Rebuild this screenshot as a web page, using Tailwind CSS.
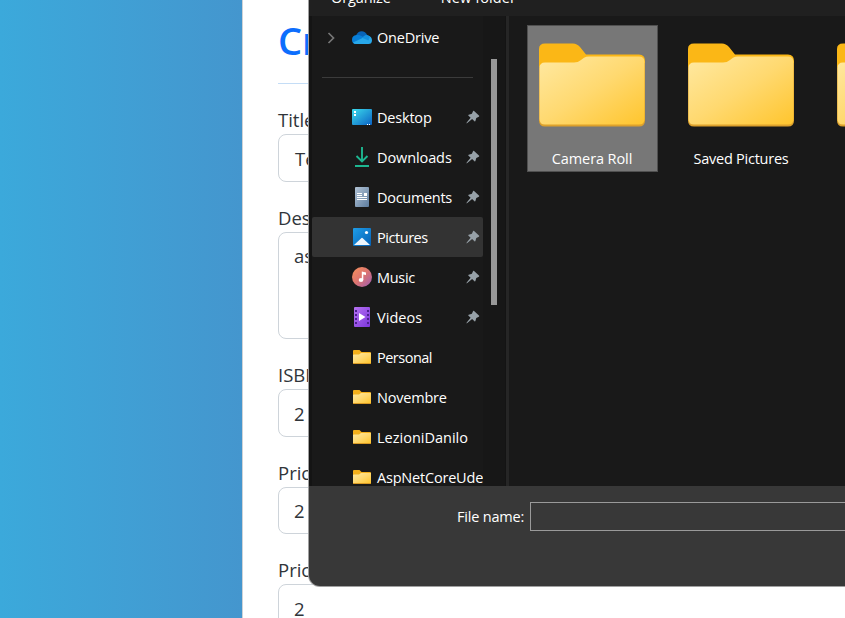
<!DOCTYPE html>
<html lang="en">
<head>
<meta charset="utf-8">
<title>Create product</title>
<script src="https://cdn.jsdelivr.net/npm/@tailwindcss/browser@4"></script>
</head>
<body class="m-0 overflow-hidden">
<svg class="absolute h-0 w-0" aria-hidden="true">
  <defs>
    <linearGradient id="gf" x1="0" y1="0" x2="1" y2="1"><stop offset="0" stop-color="#ffe9a2"/><stop offset=".5" stop-color="#ffd970"/><stop offset="1" stop-color="#ffc52d"/></linearGradient>
    <linearGradient id="gd" x1="0" y1="0" x2="1" y2="1"><stop offset="0" stop-color="#3cdcec"/><stop offset="1" stop-color="#0b62c4"/></linearGradient>
    <linearGradient id="gdoc" x1="0" y1="0" x2="1" y2="1"><stop offset="0" stop-color="#b3c4d6"/><stop offset="1" stop-color="#5c7c9e"/></linearGradient>
    <linearGradient id="gp" x1="0" y1="0" x2="1" y2="1"><stop offset="0" stop-color="#1f9ee8"/><stop offset="1" stop-color="#0560b5"/></linearGradient>
    <linearGradient id="gm" x1="0" y1="0" x2="1" y2="1"><stop offset="0" stop-color="#f9935a"/><stop offset=".5" stop-color="#dc7471"/><stop offset="1" stop-color="#9b5cb5"/></linearGradient>
    <linearGradient id="gv" x1="0" y1="0" x2="1" y2="1"><stop offset="0" stop-color="#b672f2"/><stop offset="1" stop-color="#7c35dc"/></linearGradient>
    <symbol id="bigfolder" viewBox="0 0 106 84">
      <path d="M0 6Q0 0.500 6 0.500H34Q38 .5 41 4L47 11.500H100Q106 11.500 106 18V60H0Z" fill="#fbb716"/>
      <path d="M0 24V77.500Q0 83.500 6 83.500H100Q106 83.500 106 77.500V20Z" fill="#dda12c"/>
      <path d="M.5 25Q.5 19.500 6 19.500H35Q39 19.500 42 17L45 14.800Q47 13.500 50 13.500H100Q105.500 13.500 105.500 19V76Q105.500 81.500 100 81.500H6Q.5 81.500 .5 76Z" fill="url(#gf)"/>
    </symbol>
    <symbol id="folder" viewBox="0 0 18 14"><path d="M0 1Q0 0 1 0H6.500L8.500 2H17Q18 2 18 3V13.500H0Z" fill="#f5b01a"/><path d="M0 5Q0 4.500 1 4.500H6L8 3H18V13H0Z" fill="url(#gf)"/><path d="M0 13H18V13.500Q18 14 17 14H1Q0 14 0 13.500Z" fill="#d99a24"/></symbol>
    <symbol id="pin" viewBox="0 0 14 14"><path d="M7.800.8 13.200 5.700Q13.500 6.300 12.800 6.700L10.300 7.900 9.400 11.100Q9.100 11.800 8.500 11.300L6.100 9.100 1.300 13.100.5 13.500.7 12.600 4.600 7.800 2.300 5.500Q2 4.900 2.700 4.700L5.900 3.800 7 1.200Q7.300.5 7.800.8Z" fill="#97a1a8"/></symbol>
  </defs>
</svg>

<div class="relative flex h-[618px] w-[845px] overflow-hidden bg-white font-['Open_Sans','Noto_Sans',sans-serif]">
  <div class="w-[242px] shrink-0 bg-linear-to-r from-[#3ba9db] to-[#4496ce]"></div>

  <main class="flex w-[640px] shrink-0 flex-col border-l border-[#ced2d6] pl-[35px] text-[18.500px] leading-[28px] text-[#30353a]">
    <h1 class="mt-[15px] h-[50px] text-[38px] leading-[50px] font-semibold text-[#0d6efd]">Create</h1>
    <div class="mt-[18px] h-px shrink-0 bg-[#c4ddf6]"></div>
    <label class="mt-[22px] h-[28px] shrink-0">Title</label>
    <div class="h-[48px] shrink-0 rounded-[8px] border border-[#ced4da] px-[16px] pt-[10px]">Test</div>
    <label class="mt-[22px] h-[28px] shrink-0">Description</label>
    <div class="h-[107px] shrink-0 rounded-[8px] border border-[#ced4da] px-[15px] pt-[9px]">asd</div>
    <label class="mt-[22px] h-[28px] shrink-0">ISBN</label>
    <div class="h-[48px] shrink-0 rounded-[8px] border border-[#ced4da] px-[15px] pt-[10px]">2</div>
    <label class="mt-[22px] h-[28px] shrink-0">Price</label>
    <div class="h-[47px] shrink-0 rounded-[8px] border border-[#ced4da] px-[15px] pt-[9px]">2</div>
    <label class="mt-[22px] h-[28px] shrink-0">Price</label>
    <div class="h-[48px] shrink-0 rounded-[8px] border border-[#ced4da] px-[15px] pt-[10px]">2</div>
  </main>

  <section class="absolute top-0 left-[309px] flex h-[586px] w-[536px] flex-col overflow-hidden rounded-bl-[11px] bg-[#383838] text-[14.500px] leading-[20px] text-white shadow-[0_0_0_1px_#a0a0a0]">
    <div class="flex h-[16px] shrink-0 gap-[50px] bg-[#202020] pl-[22px]">
      <span class="-mt-[12px] tracking-[-0.1px]">Organize</span>
      <span class="-mt-[12px] tracking-[0.1px]">New folder</span>
    </div>
    <div class="flex h-[470px] shrink-0 overflow-hidden bg-[#191919]">
      <nav class="flex w-[174px] shrink-0 flex-col overflow-hidden border-l-[3px] border-[#141414] tracking-[-0.2px]">
        <div class="mt-[2px] flex h-[40px] shrink-0 items-center">
          <svg class="ml-[15px] h-[12px] w-[8px]" viewBox="0 0 8 12"><path d="M1.500 1 6.500 6 1.500 11" fill="none" stroke="#777" stroke-width="1.700"/></svg>
          <svg class="-mt-[2px] ml-[17px] h-[13px] w-[20px]" viewBox="0 0 20 13"><path d="M4 4.500C6-1 13-1.500 15.500 4.500L11 9Z" fill="#0864b8"/><path d="M3.500 13Q0 12.500 0 8.700 0 4.500 4.500 4 7 3.500 9.500 5L16 9 8 13Z" fill="#087fd8"/><path d="M11 6.500Q13 3.800 16 4.500 20 5.500 20 9.500 19.800 13 16.500 13H4Q1.800 13 1 11.500L9.500 7.500Z" fill="#28a8ea"/><path d="M10 6.800Q13 3.800 16 4.500L18 5.500 16.500 9.500Z" fill="#1490df"/></svg>
          <span class="ml-[5px]">OneDrive</span>
        </div>
        <div class="mt-[19px] mr-[10px] ml-[10px] h-px shrink-0 bg-[#3b3b3b]"></div>
        <div class="mt-[19px] flex h-[40px] shrink-0 items-center pr-[3px] pl-[40px]">
          <svg class="h-[16px] w-[20px]" viewBox="0 0 20 16"><rect width="20" height="16" rx="1" fill="url(#gd)"/><path d="M2 2h2v2H2zM2 5h2v2H2zM15 15h1v1h-1zM17 15h1v1h-1z" fill="#fff"/></svg>
          <span class="mt-[2px] ml-[5px] grow">Desktop</span><svg class="h-[14px] w-[14px]"><use href="#pin"/></svg>
        </div>
        <div class="flex h-[40px] shrink-0 items-center pr-[3px] pl-[40px]">
          <svg class="h-[20px] w-[20px]" viewBox="0 0 20 20"><path d="M10 0V14M4.500 9 10 14.500 15.500 9M3 19H17" fill="none" stroke="#1db690" stroke-width="1.900"/></svg>
          <span class="mt-[2px] ml-[5px] grow tracking-[-0.1px]">Downloads</span><svg class="h-[14px] w-[14px]"><use href="#pin"/></svg>
        </div>
        <div class="flex h-[40px] shrink-0 items-center pr-[3px] pl-[40px]">
          <svg class="h-[20px] w-[20px]" viewBox="0 0 20 20"><rect x="3" width="14" height="20" rx="1" fill="url(#gdoc)"/><path d="M5 6h5v1H5zM5 8h5v1H5zM12 6h3v3h-3zM5 10h10v1H5zM5 12h10v1H5z" fill="#fff"/></svg>
          <span class="mt-[2px] ml-[5px] grow tracking-[-0.3px]">Documents</span><svg class="h-[14px] w-[14px]"><use href="#pin"/></svg>
        </div>
        <div class="flex h-[40px] shrink-0 items-center rounded-[2px] bg-[#333] pr-[3px] pl-[40px]">
          <svg class="h-[18px] w-[20px]" viewBox="0 0 20 18"><rect x="1" width="18" height="18" rx="1" fill="url(#gp)"/><path d="M2 17 9.500 10Q10 9.600 10.500 10L18 17Z" fill="#eef6fd"/><circle cx="14.500" cy="4.500" r="1.600" fill="#fff"/></svg>
          <span class="mt-[2px] ml-[5px] grow tracking-[-0.450px]">Pictures</span><svg class="h-[14px] w-[14px]"><use href="#pin"/></svg>
        </div>
        <div class="flex h-[40px] shrink-0 items-center pr-[3px] pl-[40px]">
          <svg class="h-[20px] w-[20px]" viewBox="0 0 20 20"><circle cx="10" cy="10" r="10" fill="url(#gm)"/><ellipse cx="9" cy="13" rx="2.300" ry="2" fill="#fff"/><path d="M9.800 4.500 14 5.500V8L11.300 7.400V13H9.800Z" fill="#fff"/></svg>
          <span class="mt-[2px] ml-[5px] grow tracking-[-0.3px]">Music</span><svg class="h-[14px] w-[14px]"><use href="#pin"/></svg>
        </div>
        <div class="flex h-[40px] shrink-0 items-center pr-[3px] pl-[40px]">
          <svg class="h-[20px] w-[20px]" viewBox="0 0 20 20"><rect x="2" width="16" height="20" rx="1" fill="url(#gv)"/><path d="M3 3h2v2H3zM3 7h2v2H3zM3 11h2v2H3zM3 15h2v2H3zM15 3h2v2h-2zM15 7h2v2h-2zM15 11h2v2h-2zM15 15h2v2h-2z" fill="#4b208e"/><path d="M7 6 13.500 10 7 14Z" fill="#fff"/></svg>
          <span class="mt-[2px] ml-[5px] grow tracking-[0.050px]">Videos</span><svg class="h-[14px] w-[14px]"><use href="#pin"/></svg>
        </div>
        <div class="flex h-[40px] shrink-0 items-center pl-[41px]"><svg class="h-[14px] w-[18px] shrink-0"><use href="#folder"/></svg><span class="mt-[2px] ml-[6px] tracking-[-0.5px]">Personal</span></div>
        <div class="flex h-[40px] shrink-0 items-center pl-[41px]"><svg class="h-[14px] w-[18px] shrink-0"><use href="#folder"/></svg><span class="mt-[2px] ml-[6px]">Novembre</span></div>
        <div class="flex h-[40px] shrink-0 items-center pl-[41px]"><svg class="h-[14px] w-[18px] shrink-0"><use href="#folder"/></svg><span class="mt-[2px] ml-[6px] tracking-[0px]">LezioniDanilo</span></div>
        <div class="flex h-[40px] shrink-0 items-center pl-[41px]"><svg class="h-[14px] w-[18px] shrink-0"><use href="#folder"/></svg><span class="mt-[2px] ml-[6px]">AspNetCoreUde</span></div>
      </nav>
      <div class="w-[22px] shrink-0 bg-[#171717] pt-[43px] pl-[8px]"><div class="h-[246px] w-[6px] bg-[#989898]"></div></div>
      <div class="w-[4px] shrink-0 border-l border-[#141414] bg-[#262626]"></div>
      <div class="flex shrink-0 gap-[18px] pt-[9px] pl-[18px] text-center">
        <div class="h-[147px] w-[131px] border border-[#505050] bg-[#777] pt-[17px] pr-px"><svg class="mx-auto h-[84px] w-[106px]"><use href="#bigfolder"/></svg><div class="mt-[22px] tracking-[-0.1px]">Camera Roll</div></div>
        <div class="h-[147px] w-[130px] pt-[18px]"><svg class="mx-auto h-[84px] w-[106px]"><use href="#bigfolder"/></svg><div class="mt-[22px] tracking-[-0.250px]">Saved Pictures</div></div>
        <div class="ml-px h-[147px] w-[130px] pt-[18px]"><svg class="mx-auto h-[84px] w-[106px]"><use href="#bigfolder"/></svg></div>
      </div>
    </div>
    <div class="flex h-[100px] shrink-0 pt-[16px] pl-[148px]">
      <div class="w-[73px] shrink-0 pt-[5px] tracking-[-0.2px] whitespace-nowrap">File name:</div>
      <div class="h-[29px] w-[400px] shrink-0 border border-[#9a9a9a]"></div>
    </div>
  </section>
</div>
</body>
</html>
